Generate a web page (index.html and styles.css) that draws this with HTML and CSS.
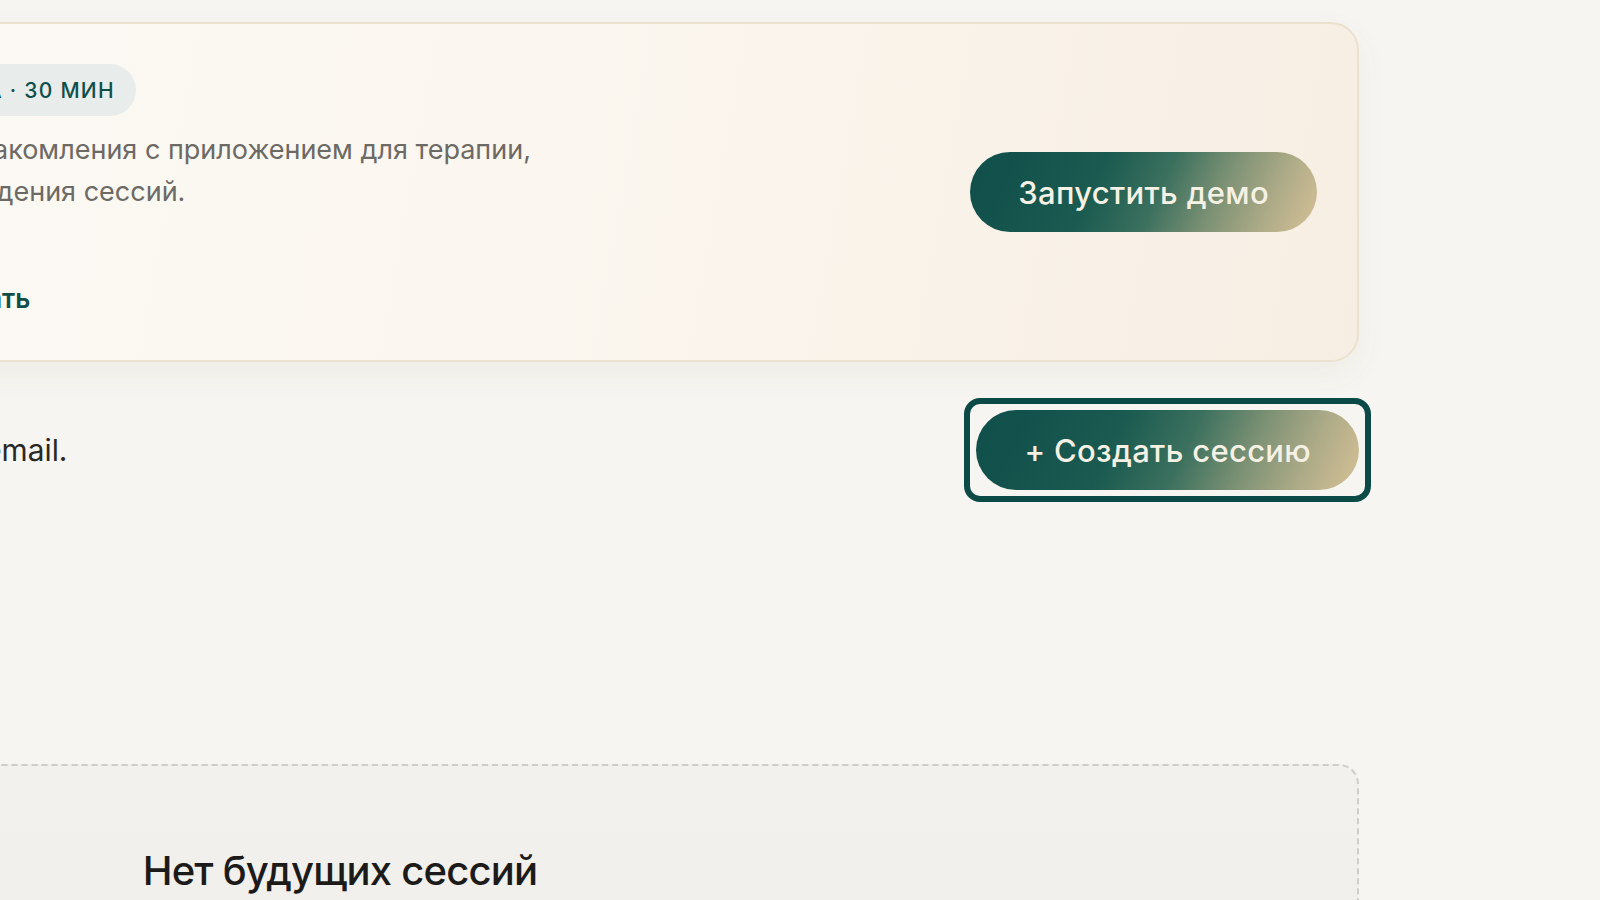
FILE: index.html
```html
<!DOCTYPE html>
<html lang="ru">
<head>
    <meta charset="UTF-8">
    <meta name="viewport" content="width=device-width, initial-scale=1.0">
    <title>Сессии</title>
    <link rel="stylesheet" href="styles.css">
</head>
<body>
    <main class="page">

        <!-- Demo invitation -->
        <section class="demo-card">
            <div class="demo-intro">
                <div class="demo-icon">
                    <svg width="36" height="36" viewBox="0 0 24 24" fill="none" stroke="#0f4d48" stroke-width="1.8" stroke-linecap="round" stroke-linejoin="round">
                        <polygon points="8 5 19 12 8 19 8 5"></polygon>
                    </svg>
                </div>
                <h2 class="demo-title">Попробуйте демо</h2>
            </div>

            <div class="demo-body">
                <span class="badge">Демо-встреча · 30 мин</span>
                <p class="demo-text">
                    Режим для ознакомления с приложением для терапии,<br>
                    записи и проведения сессий.
                </p>
                <a class="demo-link" href="#">
                    <svg width="26" height="26" viewBox="0 0 24 24" fill="none" stroke="currentColor" stroke-width="2" stroke-linecap="round" stroke-linejoin="round">
                        <path d="M3 3l18 18"></path>
                        <path d="M10.6 5.1A10 10 0 0 1 12 5c6 0 10 7 10 7a17 17 0 0 1-3.2 3.9"></path>
                        <path d="M6.6 6.6C3.9 8.4 2 12 2 12s4 7 10 7a9.7 9.7 0 0 0 5.4-1.6"></path>
                        <path d="M9.9 9.9a3 3 0 0 0 4.2 4.2"></path>
                    </svg>
                    Не показывать
                </a>
            </div>

            <button class="btn btn-primary btn-demo">Запустить демо</button>
        </section>

        <!-- Upcoming sessions -->
        <div class="sessions-head">
            <p class="sessions-note">Ссылки и напоминания приходят клиенту на email.</p>
            <button class="btn btn-primary btn-focus">+ Создать сессию</button>
        </div>

        <section class="empty-state">
            <h3 class="empty-title">Нет будущих сессий</h3>
            <p class="empty-text">Создайте сессию, и она появится здесь.</p>
        </section>

    </main>
</body>
</html>
```

FILE: styles.css
```css
body {
    margin: 0;
    background: #f6f5f1;
    color: #1d1b19;
    font-family: Inter, "Noto Sans", sans-serif;
    overflow-x: hidden;
}

.page {
    margin: 0 241px 0 -679px;
    padding-top: 22px;
}

/* Demo card */
.demo-card {
    display: flex;
    align-items: center;
    gap: 23px;
    padding: 40px 40px 46px 48px;
    border: 2px solid #ece0cf;
    border-radius: 28px;
    background: linear-gradient(100deg, #fcfbf8 0%, #fbf7f0 55%, #f7eee3 100%);
    box-shadow: 0 12px 32px rgba(120, 100, 70, 0.06);
}

.demo-intro {
    flex: none;
    width: 400px;
    display: flex;
    align-items: center;
    gap: 20px;
}

.demo-icon {
    width: 72px;
    height: 72px;
    border-radius: 50%;
    background: #e8ece9;
    display: flex;
    align-items: center;
    justify-content: center;
}

.demo-title {
    margin: 0;
    font-size: 34px;
    font-weight: 600;
}

.demo-body {
    flex: 1;
    display: flex;
    flex-direction: column;
    align-items: flex-start;
}

.badge {
    display: inline-flex;
    align-items: center;
    height: 52px;
    padding: 0 21px 0 20px;
    border-radius: 26px;
    background: #e8ecea;
    color: #0f4f4a;
    font-size: 21px;
    font-weight: 500;
    letter-spacing: 0.06em;
    text-transform: uppercase;
}

.demo-text {
    margin: 13px 0 0;
    font-size: 27px;
    line-height: 42px;
    color: #6d6964;
}

.demo-link {
    display: inline-flex;
    align-items: center;
    gap: 16px;
    margin-top: 71px;
    font-size: 26px;
    line-height: 30px;
    font-weight: 600;
    color: #0f4d48;
    text-decoration: none;
}

/* Buttons */
.btn {
    flex: none;
    height: 80px;
    padding: 0 48px;
    border: none;
    border-radius: 40px;
    font-family: inherit;
    font-size: 31px;
    font-weight: 500;
    letter-spacing: 0.01em;
    cursor: pointer;
}

.btn-primary {
    color: #f5f1e4;
    background: linear-gradient(115deg, #0f4e4a 0%, #1a5a50 36%, #3b705e 54%, #7c9174 70%, #aeab88 85%, #d6c196 100%);
}

.btn-demo {
    margin-top: 6px;
}

.btn-focus {
    position: relative;
}

.btn-focus::after {
    content: "";
    position: absolute;
    inset: -12px;
    border: 6px solid #0c4a47;
    border-radius: 16px;
}

/* Sessions header row */
.sessions-head {
    display: flex;
    align-items: center;
    justify-content: space-between;
    margin-top: 48px;
}

.sessions-note {
    margin: 0;
    font-size: 29.8px;
    color: #2a2825;
}

/* Empty state */
.empty-state {
    margin-top: 274px;
    padding: 81px 40px 80px;
    border: 2px dashed #d0cdc8;
    border-radius: 20px;
    background: linear-gradient(180deg, #f2f1ed 0%, #efeeea 100%);
    text-align: center;
}

.empty-title {
    margin: 0;
    font-size: 40px;
    line-height: 48px;
    font-weight: 500;
    letter-spacing: -0.02em;
}

.empty-text {
    margin: 16px 0 0;
    font-size: 26px;
    color: #6d6964;
}
```
